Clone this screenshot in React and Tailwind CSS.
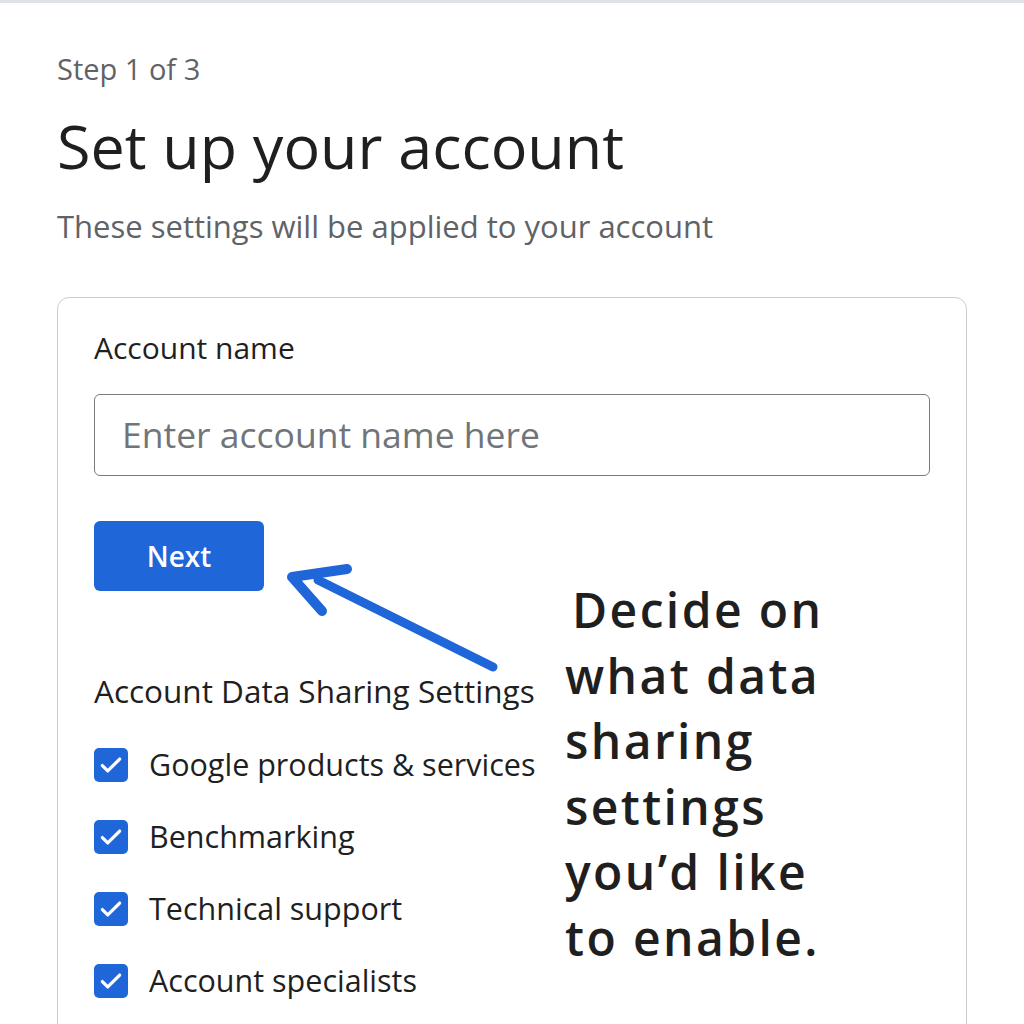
import React from "react";

const items = [
  "Google products & services",
  "Benchmarking",
  "Technical support",
  "Account specialists",
];

const noteLines = ["what data", "sharing", "settings", "you’d like", "to enable."];

function Check() {
  return (
    <div className="w-[34px] h-[34px] rounded-[5px] bg-[#1f66d9] flex items-center justify-center shrink-0">
      <svg width="26" height="26" viewBox="0 0 24 24" fill="none">
        <path d="M4 12.5l5 5L20 6.5" stroke="white" strokeWidth="3" strokeLinecap="round" strokeLinejoin="round" />
      </svg>
    </div>
  );
}

export default function App() {
  return (
    <div className="w-[1024px] h-[1024px] overflow-hidden bg-white border-t-[3px] border-[#dfe3e8] font-['Open_Sans',sans-serif] text-[#1f1f1f]">
      <div className="px-[57px] pt-[48px]">
        <div className="text-[29px] leading-[36px] text-[#5f6368]">Step 1 of 3</div>
        <h1 className="mt-[24px] text-[61px] leading-[70px] text-[#1f1f1f]">Set up your account</h1>
        <div className="mt-[25px] text-[31px] leading-[40px] text-[#5f6368]">These settings will be applied to your account</div>

        <div className="relative mt-[51px] border border-[#c9cdd2] rounded-[12px] h-[800px] px-[36px] pt-[30px]">
          <div className="text-[30px] leading-[40px]">Account name</div>
          <div className="mt-[26px] h-[82px] border-[1.5px] border-[#7a7a7a] rounded-[6px] flex items-center px-[27px]">
            <span className="text-[35.5px] text-[#70757a]">Enter account name here</span>
          </div>
          <div className="flex">
            <div className="w-[470px] shrink-0">
              <div className="mt-[45px] w-[170px] h-[70px] rounded-[6px] bg-[#1f66d9] flex items-center justify-center text-white text-[28px] font-semibold">Next</div>
              <div className="mt-[79px] text-[31.5px] leading-[42px] whitespace-nowrap">Account Data Sharing Settings</div>
              <div className="mt-[36px] flex flex-col gap-[38px]">
                {items.map((t) => (
                  <div key={t} className="flex items-center gap-[21px] h-[34px]">
                    <Check />
                    <span className="text-[30.5px] whitespace-nowrap">{t}</span>
                  </div>
                ))}
              </div>
            </div>
            <div className="ml-[1px] mt-[101px] text-[48px] leading-[65.5px] tracking-[2.4px] font-semibold text-[#1f1f1f] whitespace-nowrap">
              <div className="pl-[7px]">Decide on</div>
              {noteLines.map((l) => (
                <div key={l}>{l}</div>
              ))}
            </div>
          </div>
          <svg className="absolute left-[220px] top-[260px]" width="230" height="120" viewBox="0 0 230 120" fill="none">
            <path d="M215 109 L40 22" stroke="#1f66d9" strokeWidth="9" strokeLinecap="round" />
            <path d="M69 11 L14 19 L44 53" stroke="#1f66d9" strokeWidth="10" strokeLinecap="round" strokeLinejoin="round" />
          </svg>
        </div>
      </div>
    </div>
  );
}
